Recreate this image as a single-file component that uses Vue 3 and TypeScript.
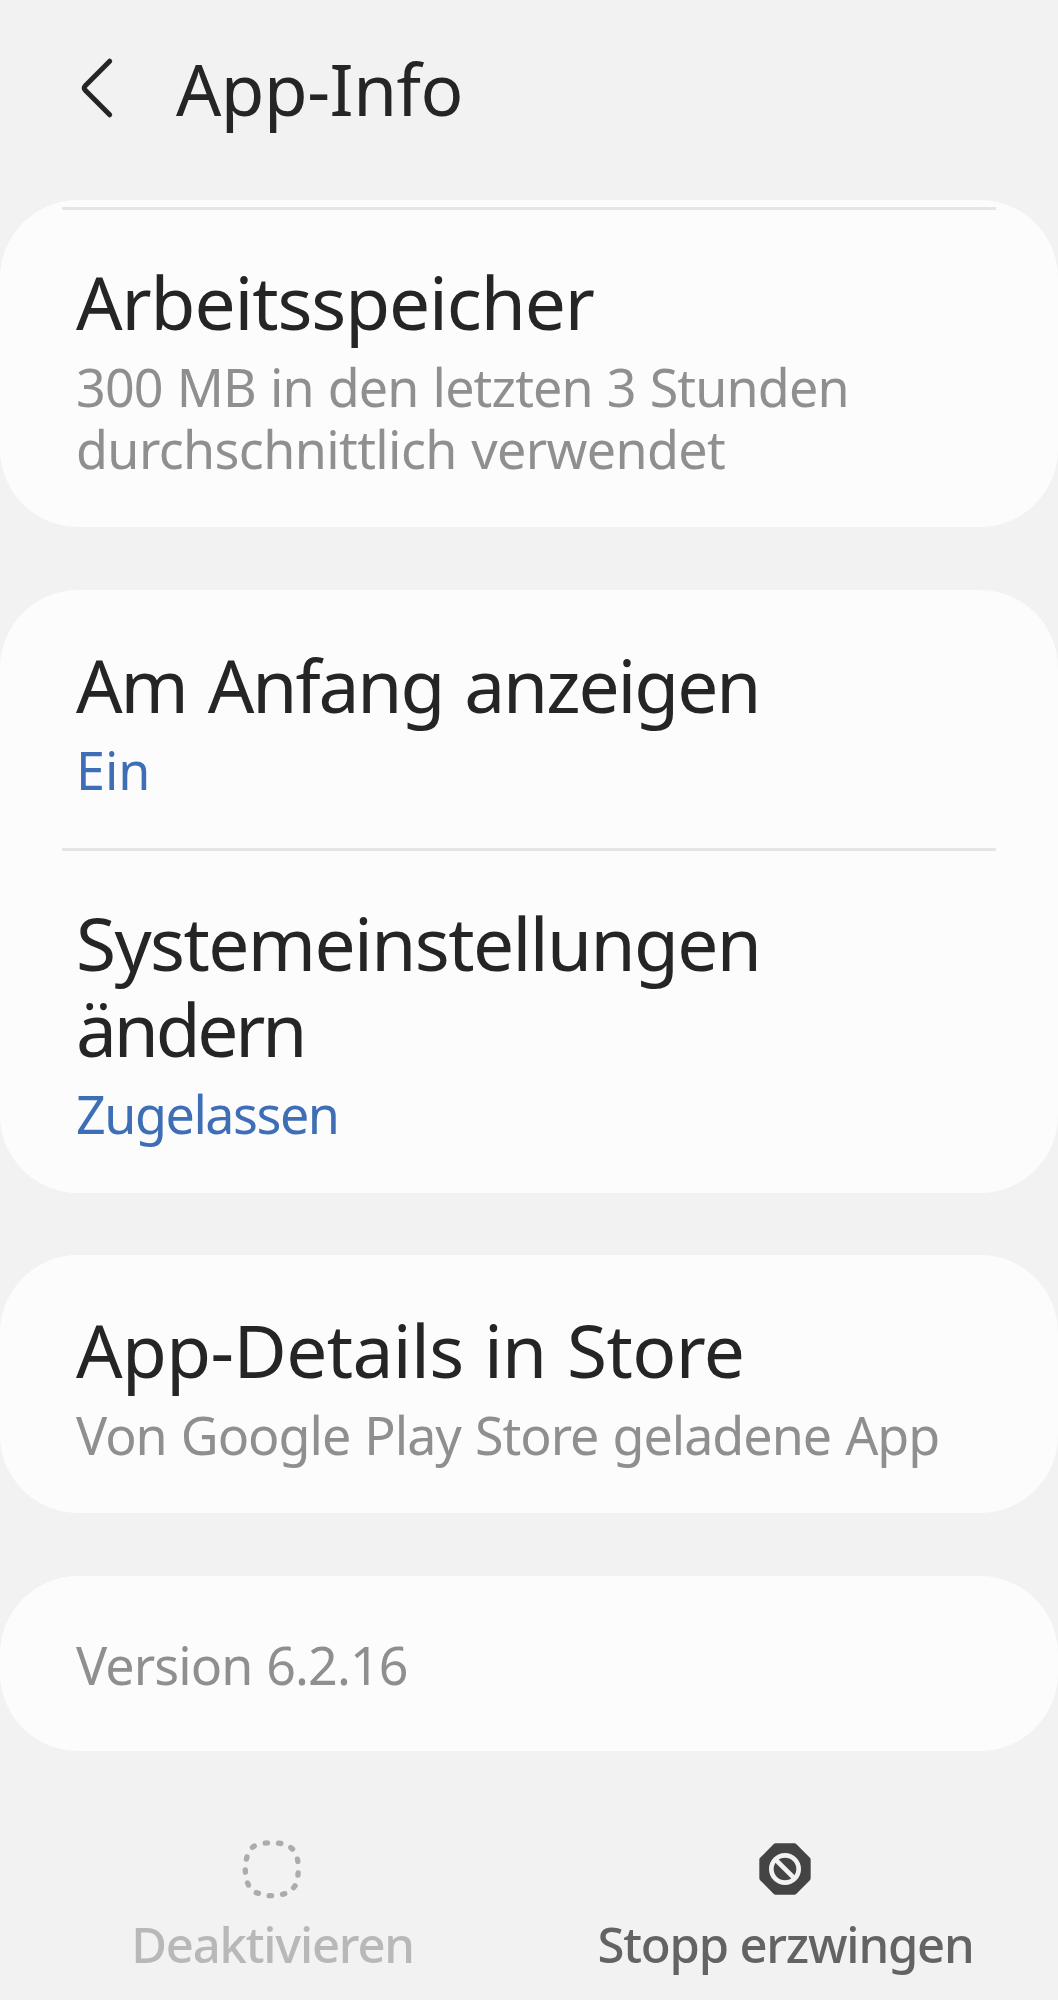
<script setup lang="ts">
interface Line {
  text: string
  /** Letter spacing in px */
  ls: number
  /** Extra word spacing in px */
  ws?: number
}
interface Item {
  title: Line[]
  sub: Line[]
  accent?: boolean
}

const cards: Item[][] = [
  [
    {
      title: [{ text: 'Arbeitsspeicher', ls: -1.1 }],
      sub: [
        { text: '300 MB in den letzten 3 Stunden', ls: -0.85, ws: 1.3 },
        { text: 'durchschnittlich verwendet', ls: -0.62, ws: 1.5 },
      ],
    },
  ],
  [
    {
      title: [{ text: 'Am Anfang anzeigen', ls: -2.05, ws: 4 }],
      sub: [{ text: 'Ein', ls: 0 }],
      accent: true,
    },
    {
      title: [
        { text: 'Systemeinstellungen', ls: -1.6 },
        { text: 'ändern', ls: -3.2 },
      ],
      sub: [{ text: 'Zugelassen', ls: -1.45 }],
      accent: true,
    },
  ],
  [
    {
      title: [{ text: 'App-Details in Store', ls: -0.62, ws: 2 }],
      sub: [{ text: 'Von Google Play Store geladene App', ls: -1, ws: 1.5 }],
    },
  ],
  [{ title: [], sub: [{ text: 'Version 6.2.16', ls: -0.9, ws: 1 }] }],
]

// Dashes of the disabled icon: centre x, centre y, rotation
const dashes: [number, number, number][] = [
  [73, 12, -3], [113, 13, 8], [149, 28, 40], [167, 64, 80], [168, 105, 95],
  [157, 143, 128], [125, 165, 165], [85, 170, 0], [46, 162, 17], [18, 135, 65],
  [10, 96, 88], [14, 57, 103], [34, 23, 145],
]

const spacing = (l: Line) => ({
  letterSpacing: l.ls + 'px',
  wordSpacing: (l.ws ?? 0) + 'px',
})
</script>

<template>
  <div class="screen">
    <header class="header">
      <svg class="back" viewBox="0 0 40 68" fill="none">
        <path d="M33.7 7.2 L9.5 31.4 Q7 34 9.5 36.6 L33.7 60.8" stroke="#252525" stroke-width="5" stroke-linecap="round" stroke-linejoin="round" />
      </svg>
      <h1 class="heading">App-Info</h1>
    </header>

    <main class="cards">
      <section v-for="(card, c) in cards" :key="c" class="card" :class="{ first: c === 0, single: c === 3 }">
        <div v-for="(item, i) in card" :key="i" class="item" :class="{ divided: i > 0 }">
          <h2 v-if="item.title.length" class="title">
            <span v-for="l in item.title" :key="l.text" class="line" :style="spacing(l)">{{ l.text }}</span>
          </h2>
          <p class="sub" :class="{ accent: item.accent }">
            <span v-for="l in item.sub" :key="l.text" class="line" :style="spacing(l)">{{ l.text }}</span>
          </p>
        </div>
      </section>
    </main>

    <footer class="actions">
      <button class="action disabled" disabled>
        <svg class="icon" viewBox="0 0 180 180">
          <line
            v-for="([x, y, r], i) in dashes" :key="i" x1="-3.5" y1="0" x2="3.5" y2="0"
            :transform="`translate(${x} ${y}) rotate(${r})`"
            stroke="#acacac" stroke-width="16" stroke-linecap="round"
          />
        </svg>
        <span class="label">Deaktivieren</span>
      </button>
      <button class="action">
        <svg class="icon" viewBox="0 0 180 180">
          <path d="M62 21 H118 L159 62 V118 L118 159 H62 L21 118 V62 Z" fill="#444" stroke="#444" stroke-width="16" stroke-linejoin="round" />
          <circle cx="90" cy="90" r="41" fill="none" stroke="#f2f2f2" stroke-width="14" />
          <path d="M61 61 L119 119" stroke="#f2f2f2" stroke-width="14" />
        </svg>
        <span class="label">Stopp erzwingen</span>
      </button>
    </footer>
  </div>
</template>

<style>
body {
  background: #f2f2f2;
}
</style>

<style scoped>
.screen {
  width: 1058px;
  height: 2000px;
  overflow: hidden;
  background: #f2f2f2;
  color: #252525;
  font-family: "Noto Sans", "Open Sans", sans-serif;
  font-kerning: normal;
}
.header {
  display: flex;
  align-items: center;
  box-sizing: border-box;
  height: 200px;
  padding: 0 0 24px 76px;
}
.back {
  width: 40px;
  height: 68px;
  margin-right: 60px;
}
.heading {
  margin: 2px 0 0;
  font-size: 71px;
  font-weight: 400;
  line-height: 84px;
  letter-spacing: -0.5px;
}
.cards {
  display: flex;
  flex-direction: column;
  gap: 62.4px;
}
.card {
  box-sizing: border-box;
  padding-top: 3px;
  border-radius: 78px;
  background: #fcfcfc;
}
.card.first {
  padding-top: 7px;
}
.item {
  padding: 49px 76px 47.1px;
}
.first .item,
.item.divided {
  background: linear-gradient(#e5e5e5, #e5e5e5) 62px 0 / 934px 3px no-repeat;
  padding-top: 52px;
}
.first .item {
  padding-bottom: 46.8px;
}
.single .item {
  padding: 55px 76px;
}
.title,
.sub {
  margin: 0;
  font-weight: 400;
}
.title {
  margin-bottom: 11.4px;
  font-size: 73px;
  line-height: 86px;
}
.sub {
  color: #8f8f8f;
  font-size: 52px;
  line-height: 62px;
}
.sub.accent {
  color: #3e6eb5;
}
.line {
  display: block;
  white-space: nowrap;
}
.actions {
  display: flex;
  padding: 88px 17px 0 15px;
}
.action {
  display: flex;
  flex: 1 1 0;
  flex-direction: column;
  align-items: center;
  gap: 15px;
  padding: 0;
  border: 0;
  background: none;
  color: #636363;
  font-family: inherit;
}
.action.disabled {
  color: #b8b8b8;
}
.icon {
  width: 60px;
  height: 60px;
}
.label {
  padding-left: 2px;
  font-size: 49px;
  font-weight: 500;
  line-height: 60px;
  letter-spacing: -1.2px;
  white-space: nowrap;
}
</style>
